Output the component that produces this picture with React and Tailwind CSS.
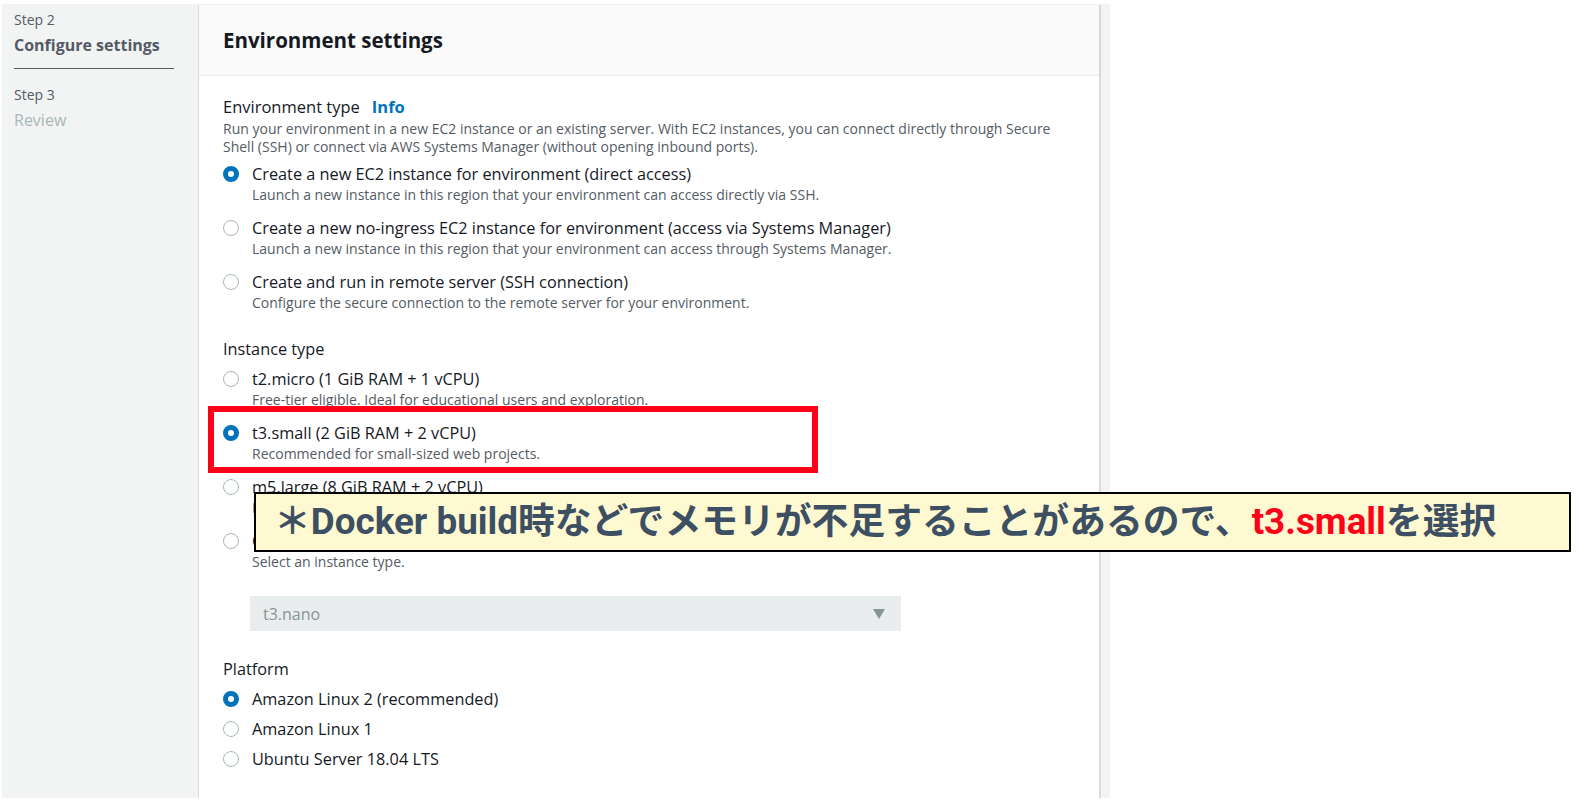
import React from "react";

function Radio({ checked }) {
  return checked ? (
    <span className="box-border block h-[16px] w-[16px] shrink-0 rounded-full border-[5px] border-[#0073bb] bg-white" />
  ) : (
    <span className="box-border block h-[16px] w-[16px] shrink-0 rounded-full border-[1.5px] border-[#aab7b8] bg-white" />
  );
}

function Option({ checked, label, desc }) {
  return (
    <div className="flex items-start gap-[13px]">
      <div className="flex h-[20px] items-center">
        <Radio checked={checked} />
      </div>
      <div className="flex flex-col">
        <div className="h-[20px] whitespace-nowrap text-[16.3px] leading-[20px] text-[#16191f]">{label}</div>
        {desc && <div className="mt-[1px] whitespace-nowrap text-[14px] leading-[20px] text-[#545b64]">{desc}</div>}
      </div>
    </div>
  );
}

export default function App() {
  return (
    <div className="relative h-[808px] w-[1581px] overflow-hidden bg-white" style={{ fontFamily: "'Open Sans', 'Noto Sans', sans-serif" }}>
      <div className="ml-[2px] mt-[4px] flex h-[794px] w-[1108px] bg-[#f2f3f3]">
        {/* Sidebar */}
        <div className="w-[196px] shrink-0 pl-[12px] pt-[7px]">
          <div className="text-[14px] leading-[18px] text-[#545b64]">Step 2</div>
          <div className="mt-[5px] text-[16px] font-bold leading-[22px] text-[#545b64]">Configure settings</div>
          <div className="mt-[12px] h-[1px] w-[160px] bg-[#545b64]" />
          <div className="mt-[17px] text-[14px] leading-[18px] text-[#545b64]">Step 3</div>
          <div className="mt-[5px] text-[16px] leading-[22px] text-[#aab7b8]">Review</div>
        </div>
        {/* Panel */}
        <div className="mt-[1px] flex w-[903px] flex-col border-l border-r-2 border-[#d5dbdb] bg-white">
          <div className="flex h-[71px] items-center border-b border-[#eaeded] bg-[#fafafa] pl-[24px]">
            <h2 className="text-[20.5px] font-bold leading-[24px] text-[#16191f]">Environment settings</h2>
          </div>
          <div className="flex flex-col pl-[24px] pr-[30px] pt-[20px]">
            <div className="flex items-center gap-[12px] text-[16.5px] leading-[22px] text-[#16191f]">
              <span>Environment type</span>
              <span className="font-bold text-[#0073bb]">Info</span>
            </div>
            <div className="mt-[2px] text-[14px] leading-[18px] text-[#545b64]">
              Run your environment in a new EC2 instance or an existing server. With EC2 instances, you can connect directly through Secure Shell (SSH) or connect via AWS Systems Manager (without opening inbound ports).
            </div>
            <div className="mt-[8px] flex flex-col gap-[13px]">
              <Option checked label="Create a new EC2 instance for environment (direct access)" desc="Launch a new instance in this region that your environment can access directly via SSH." />
              <Option label="Create a new no-ingress EC2 instance for environment (access via Systems Manager)" desc="Launch a new instance in this region that your environment can access through Systems Manager." />
              <Option label="Create and run in remote server (SSH connection)" desc="Configure the secure connection to the remote server for your environment." />
            </div>

            <div className="mt-[25px] text-[16.3px] leading-[22px] text-[#16191f]">Instance type</div>
            <div className="mt-[9px] flex flex-col gap-[13px]">
              <Option label="t2.micro (1 GiB RAM + 1 vCPU)" desc="Free-tier eligible. Ideal for educational users and exploration." />
              <Option checked label="t3.small (2 GiB RAM + 2 vCPU)" desc="Recommended for small-sized web projects." />
              <Option label="m5.large (8 GiB RAM + 2 vCPU)" desc="Recommended for production and general-purpose development." />
              <Option label="Other instance type" desc="Select an instance type." />
            </div>
            <div className="ml-[27px] mt-[24px] flex h-[35px] w-[651px] items-center justify-between bg-[#eaeded] pl-[13px] pr-[16px]">
              <span className="text-[16px] text-[#879596]">t3.nano</span>
              <svg width="12" height="10" viewBox="0 0 12 10"><path d="M0 0 H12 L6 10 Z" fill="#879596" /></svg>
            </div>

            <div className="mt-[27px] text-[16.3px] leading-[22px] text-[#16191f]">Platform</div>
            <div className="mt-[9px] flex flex-col gap-[10px]">
              <Option checked label="Amazon Linux 2 (recommended)" />
              <Option label="Amazon Linux 1" />
              <Option label="Ubuntu Server 18.04 LTS" />
            </div>
          </div>
        </div>
      </div>

      {/* Red highlight */}
      <div className="absolute left-[208px] top-[406px] h-[67px] w-[610px] border-[6px] border-[#ff0019]" />

      {/* Callout */}
      <div
        className="absolute left-[254px] top-[492px] flex h-[60px] w-[1317px] items-center border-2 border-black bg-[#fff9d1] pl-[18px] text-[36.8px] font-bold leading-none text-[#3d4f63]"
        style={{ fontFamily: "Roboto, 'Noto Sans CJK JP', sans-serif" }}
      >
        <span>＊Docker build時などでメモリが不足することがあるので、</span>
        <span className="text-[#ff0019]">t3.small</span>
        <span>を選択</span>
      </div>
    </div>
  );
}
